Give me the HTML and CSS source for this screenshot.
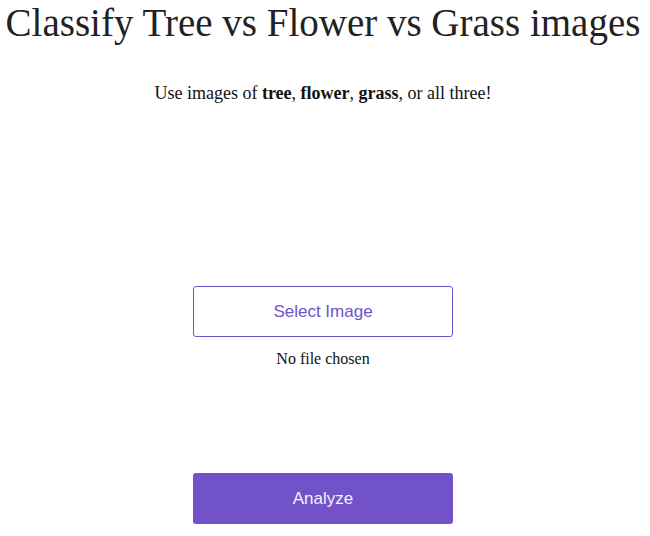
FILE: index.html
```html
<!DOCTYPE html>
<html>
<head>
<meta charset="utf-8">
<link rel="stylesheet" href="styles.css">
</head>
<body>
<div class="page">
  <h1 class="title">Classify Tree vs Flower vs Grass images</h1>
  <p class="subtitle">Use images of <b>tree</b>, <b>flower</b>, <b>grass</b>, or all three!</p>
  <div class="upload">
    <button class="select-btn">Select Image</button>
    <div class="file-status">No file chosen</div>
  </div>
  <button class="analyze-btn">Analyze</button>
</div>
</body>
</html>
```
FILE: styles.css
```css
html, body {
  margin: 0;
  padding: 0;
  background: #ffffff;
}
body {
  font-family: "Liberation Serif", serif;
  color: #111;
}
.page {
  width: 646px;
  display: flex;
  flex-direction: column;
  align-items: center;
}
.title {
  margin: 0;
  padding: 0;
  font-weight: normal;
  font-size: 39px;
  line-height: 46px;
  color: #222;
  white-space: nowrap;
}
.subtitle {
  margin: 35px 0 0 0;
  font-size: 18px;
  line-height: 24px;
}
.upload {
  margin-top: 181px;
  display: flex;
  flex-direction: column;
  align-items: center;
}
.select-btn {
  width: 260px;
  height: 51px;
  box-sizing: border-box;
  border: 1px solid #7152c9;
  border-radius: 3px;
  background: #fff;
  color: #7152c9;
  font-family: "Liberation Sans", Arial, sans-serif;
  font-size: 17px;
}
.file-status {
  margin-top: 12px;
  font-size: 16px;
  line-height: 20px;
}
.analyze-btn {
  margin-top: 104px;
  width: 260px;
  height: 51px;
  box-sizing: border-box;
  border: none;
  border-radius: 3px;
  background: #7152c9;
  color: #f4f0ff;
  font-family: "Liberation Sans", Arial, sans-serif;
  font-size: 17px;
}
```
